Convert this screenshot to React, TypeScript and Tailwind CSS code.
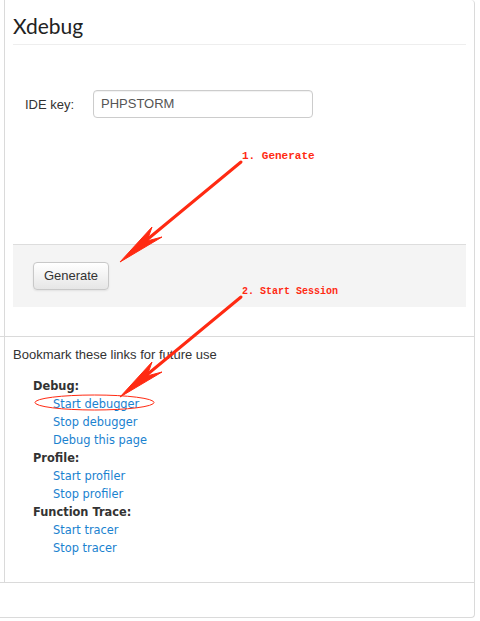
import React from "react";

const sans = "font-['Helvetica_Neue','Liberation_Sans',Arial,sans-serif]";
const links = "font-['DejaVu_Sans',Verdana,sans-serif]";

type Group = { title: string; items: string[] };

const GROUPS: Group[] = [
  { title: "Debug:", items: ["Start debugger", "Stop debugger", "Debug this page"] },
  { title: "Profile:", items: ["Start profiler", "Stop profiler"] },
  { title: "Function Trace:", items: ["Start tracer", "Stop tracer"] },
];

function Arrow({ dy }: { dy: number }) {
  // shaft + swept-back head, drawn like a hand annotation
  return (
    <g transform={`translate(0 ${dy})`} fill="#ff2a12" stroke="#ff2a12">
      <line x1="241" y1="162" x2="143" y2="243" strokeWidth="3" strokeLinecap="round" />
      <polygon points="120,262 152,227 147,241 162,237" strokeWidth="1" strokeLinejoin="round" />
    </g>
  );
}

export default function App() {
  return (
    <div className={`relative w-[480px] h-[621px] bg-white text-[#333] ${sans}`}>
      <div className="w-[475px] h-[618px] flex flex-col border-r border-b border-[#dadada] rounded-tr-[4px] rounded-br-[4px]">
        {/* top panel */}
        <div className="h-[336px] ml-[4px] border-l border-[#dadada] px-[8px] flex flex-col">
          <h2 className="pt-[14px] pb-[6px] text-[21px] leading-[24px] text-[#222] font-['Lato','Helvetica_Neue',sans-serif] border-b border-[#eee]">
            Xdebug
          </h2>
          <div className="mt-[45px] pl-[12px] flex items-center">
            <label className="w-[68px] text-[13px] pt-[1px]">IDE key:</label>
            <div className="w-[220px] h-[28px] border border-[#ccc] rounded-[4px] px-[7px] flex items-center text-[13px] text-[#555] shadow-[inset_0_1px_1px_rgba(0,0,0,0.06)]">
              PHPSTORM
            </div>
          </div>
          <div className="mt-[126px] h-[63px] bg-[#f4f4f4] border-t border-[#ddd] pl-[20px] pt-[17px]">
            <button className="w-[76px] h-[28px] rounded-[4px] border border-[#c8c8c8] bg-linear-to-b from-white to-[#e6e6e6] text-[13px] text-[#333] shadow-[0_1px_2px_rgba(0,0,0,0.08)]">
              Generate
            </button>
          </div>
        </div>
        <div className="h-px bg-[#dadada]" />

        {/* bookmarks panel */}
        <div className="h-[245px] ml-[4px] border-l border-[#dadada] px-[8px]">
          <p className="mt-[10px] text-[13px] leading-[16px]">Bookmark these links for future use</p>
          <div className={`mt-[14px] pl-[20px] ${links} text-[11.4px] leading-[18px]`}>
            {GROUPS.map((g) => (
              <div key={g.title}>
                <div className="font-bold text-[#333]">{g.title}</div>
                {g.items.map((it) => (
                  <div key={it} className="pl-[20px]">
                    <a className="text-[#1a82cf]">{it}</a>
                  </div>
                ))}
              </div>
            ))}
          </div>
        </div>
        <div className="h-px bg-[#dadada]" />
        <div className="flex-1" />
      </div>

      {/* red annotations */}
      <svg className="absolute left-0 top-0" width="480" height="621" viewBox="0 0 480 621">
        <Arrow dy={0} />
        <Arrow dy={135} />
        <ellipse cx="94.5" cy="402.5" rx="59.5" ry="7.5" fill="none" stroke="#ff2a12" strokeWidth="1" />
        <text x="242" y="159" fill="#ff2a12" fontSize="11" fontWeight="bold" fontFamily="'Liberation Mono', monospace">1. Generate</text>
        <text x="242" y="294" fill="#ff2a12" fontSize="10" fontWeight="bold" fontFamily="'Liberation Mono', monospace">2. Start Session</text>
      </svg>
    </div>
  );
}
